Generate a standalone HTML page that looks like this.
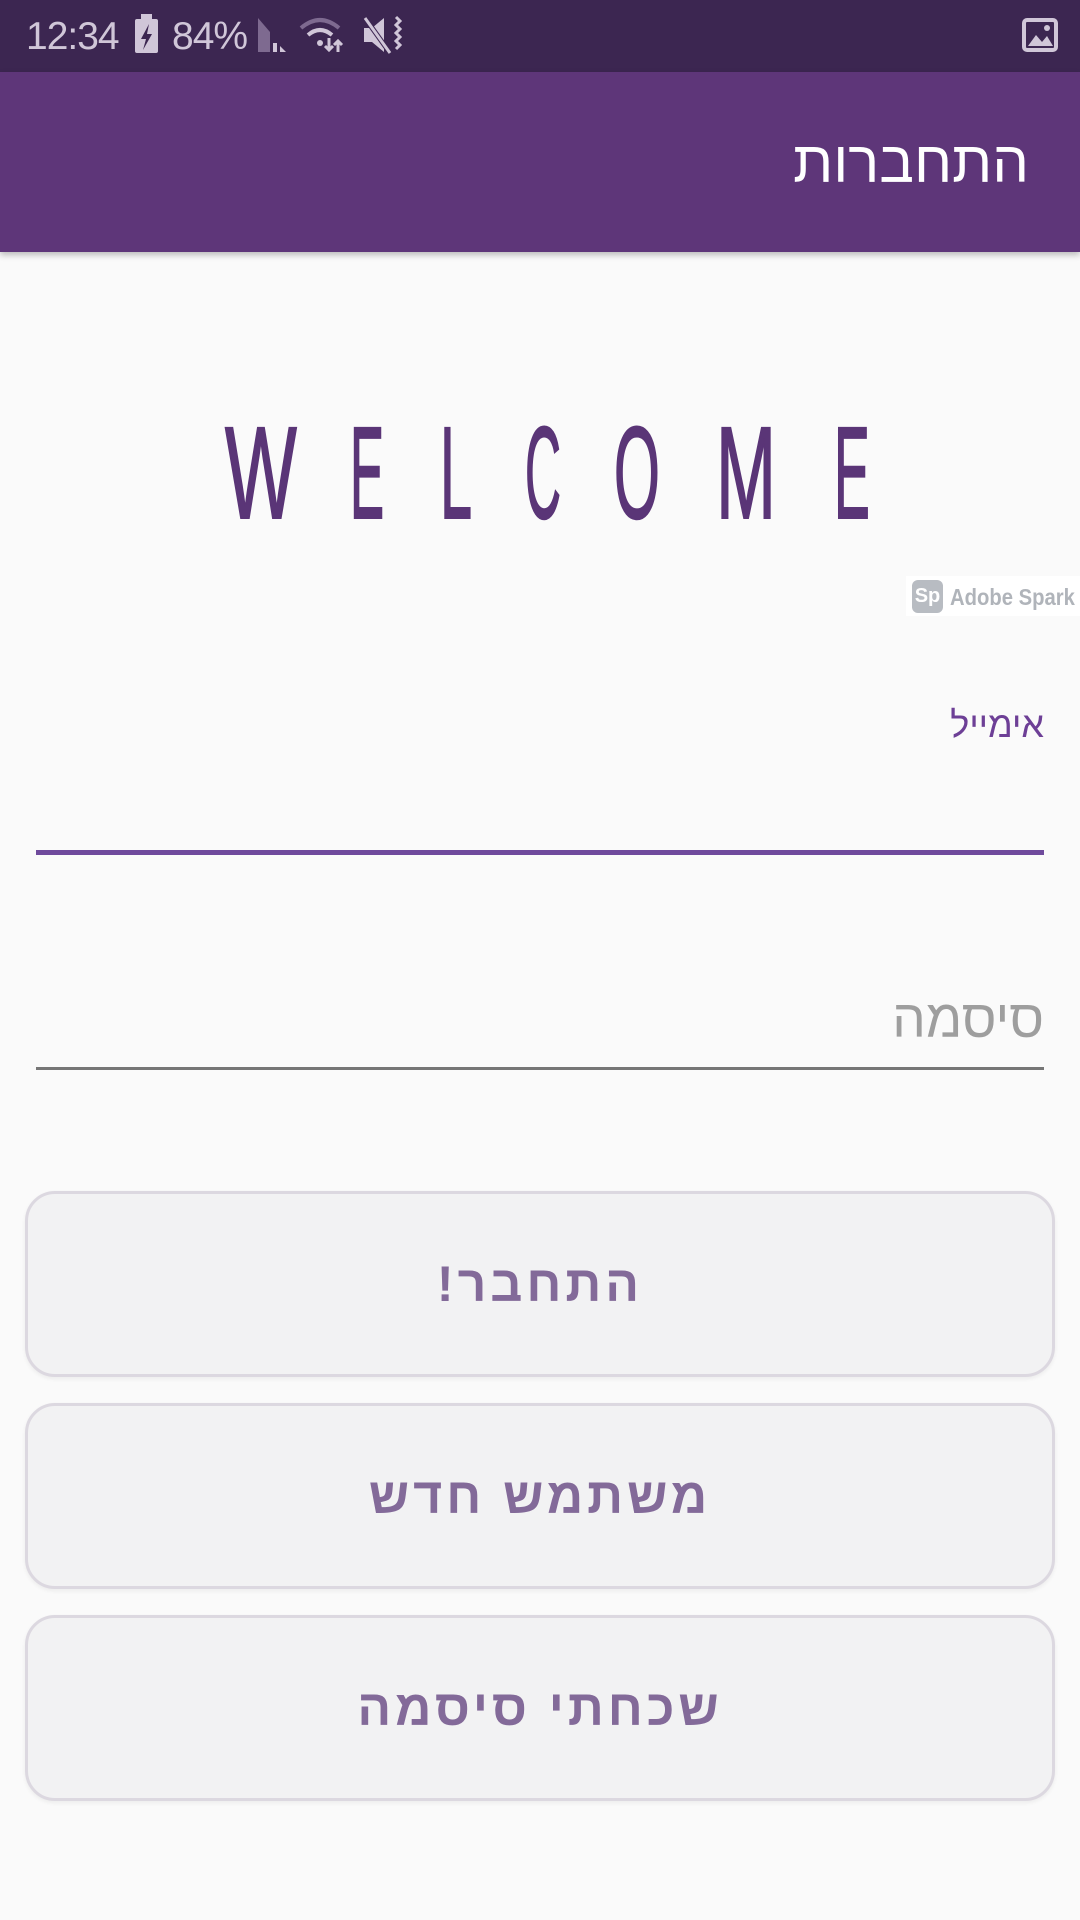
<!DOCTYPE html>
<html><head><meta charset="utf-8"><style>
*{margin:0;padding:0;box-sizing:border-box}
body{width:1080px;height:1920px;background:#fafafa;position:relative;overflow:hidden;font-family:"Liberation Sans","Noto Sans CJK SC",sans-serif}
.sb{position:absolute;left:0;top:0;width:1080px;height:72px;background:#3c2651;color:#d0c6d8}
.ab{position:absolute;left:0;top:72px;width:1080px;height:180px;background:#5e3679;box-shadow:0 3px 6px rgba(0,0,0,.25)}
.t{position:absolute;right:51px;top:134px;font-size:58px;color:#fff;direction:rtl;line-height:1}
.w{position:absolute;top:407px;font-size:131px;line-height:131px;color:#5a3577;font-weight:normal;-webkit-text-stroke:2px #5a3577;transform-origin:0 0}
.lbl{position:absolute;right:36px;direction:rtl}
.btn{position:absolute;left:25px;width:1030px;height:186px;border:3px solid #dcd8e0;border-radius:30px;background:#f2f2f3;display:flex;align-items:center;justify-content:center;color:#836a99;font-weight:bold;font-size:50px;letter-spacing:4px;direction:rtl;box-shadow:0 2px 4px rgba(0,0,0,.06)}
</style></head><body>
<div class="sb">
<div style="position:absolute;left:26px;top:16px;font-size:39px;line-height:42px;letter-spacing:-1px">12:34</div>
<div style="position:absolute;left:135px;top:19px;width:23px;height:34px;background:#d0c6d8;border-radius:2px"></div>
<div style="position:absolute;left:141px;top:14px;width:11px;height:6px;background:#d0c6d8"></div>
<svg style="position:absolute;left:135px;top:20px" width="23" height="34"><path d="M14 4 L6 19 L11 19 L8 30 L17 14 L12 14 Z" fill="#3c2651"/></svg>
<div style="position:absolute;left:172px;top:16px;font-size:39px;line-height:42px;letter-spacing:-1px">84%</div>
<svg style="position:absolute;left:256px;top:16px" width="40" height="38"><path d="M2 2 L14 16 L14 36 L2 36Z" fill="#7e6a90"/><rect x="17" y="27" width="4" height="9" fill="#d0c6d8"/><path d="M24 30 L30 36 L24 36Z" fill="#d0c6d8"/></svg>
<svg style="position:absolute;left:298px;top:14px" width="50" height="42"><path d="M3 14 Q22 -2 41 14" stroke="#7e6a90" stroke-width="4" fill="none"/><path d="M10 21 Q22 11 34 21" stroke="#d0c6d8" stroke-width="4" fill="none"/><circle cx="22" cy="29" r="3" fill="#d0c6d8"/><path d="M31 24v12M27 32l4 4 4-4M40 38V28M36 31l4-4 4 4" stroke="#d0c6d8" stroke-width="3" fill="none"/></svg>
<svg style="position:absolute;left:362px;top:15px" width="42" height="42"><path d="M2 13h8l12-10v34l-12-10H2Z" fill="#d0c6d8"/><path d="M3 3 L28 38" stroke="#3c2651" stroke-width="5"/><path d="M3 3 L28 38" stroke="#d0c6d8" stroke-width="3"/><path d="M34 2 l4 4 -4 4 4 4 -4 4 4 4 -4 4 4 4 -4 4" stroke="#d0c6d8" stroke-width="3" fill="none"/></svg>
<svg style="position:absolute;left:1022px;top:18px" width="36" height="34"><rect x="2" y="2" width="32" height="30" rx="3" fill="none" stroke="#d0c6d8" stroke-width="4"/><path d="M6 28 L14 17 L20 24 L25 18 L31 28Z" fill="#d0c6d8"/><circle cx="25" cy="10" r="3" fill="#d0c6d8"/></svg>
</div>
<div class="ab"></div>
<div class="t">התחברות</div>

<div class="w" style="left:225px;transform:scaleX(.58)">W</div>
<div class="w" style="left:350px;transform:scaleX(.39)">E</div>
<div class="w" style="left:440px;transform:scaleX(.44)">L</div>
<div class="w" style="left:525px;transform:scaleX(.38)">C</div>
<div class="w" style="left:614px;transform:scaleX(.45)">O</div>
<div class="w" style="left:716px;transform:scaleX(.55)">M</div>
<div class="w" style="left:834px;transform:scaleX(.41)">E</div>

<div style="position:absolute;left:906px;top:576px;width:174px;height:40px;background:#fff"></div>
<div style="position:absolute;left:912px;top:580px;width:31px;height:33px;background:#b8bcc2;border-radius:6px;color:#fff;font-weight:bold;font-size:20px;line-height:33px;text-align:center">Sp</div>
<div style="position:absolute;left:950px;top:583px;font-size:23px;color:#b0b4ba;font-weight:bold;line-height:28px;white-space:nowrap;transform:scaleX(.88);transform-origin:0 0">Adobe Spark</div>

<div class="lbl" style="top:704px;font-size:36px;color:#6d3f96;line-height:42px">אימייל</div>
<div style="position:absolute;left:36px;top:850px;width:1008px;height:5px;background:#6f4a9c"></div>
<div class="lbl" style="top:990px;font-size:53px;color:#9e9e9e;line-height:60px">סיסמה</div>
<div style="position:absolute;left:36px;top:1067px;width:1008px;height:3px;background:#767676"></div>

<div class="btn" style="top:1191px">התחבר!</div>
<div class="btn" style="top:1403px">משתמש חדש</div>
<div class="btn" style="top:1615px">שכחתי סיסמה</div>
</body></html>
